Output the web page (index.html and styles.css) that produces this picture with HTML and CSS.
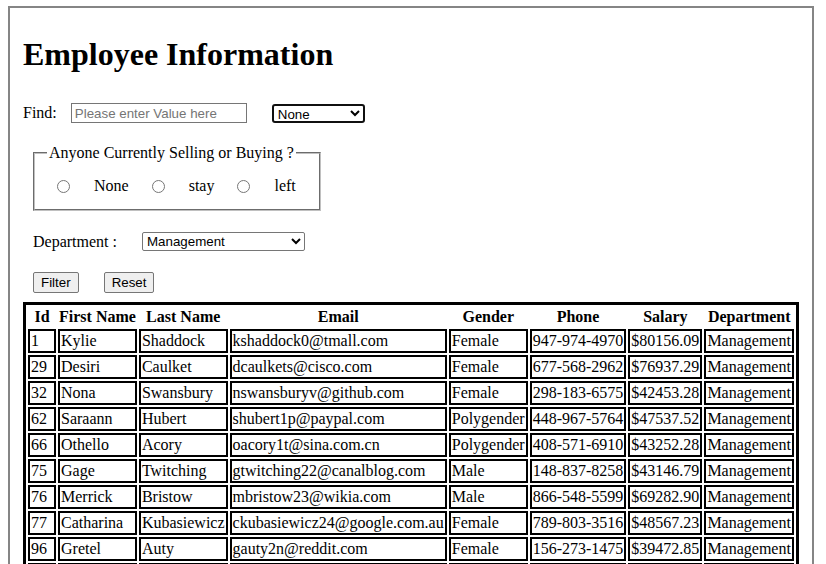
FILE: index.html
```html
<!DOCTYPE html>
<html>
<head>
<meta charset="utf-8">
<title>Employee Information</title>
<link rel="stylesheet" href="styles.css">
</head>
<body>
<div class="page">
  <h1 class="title">Employee Information</h1>
  <div class="find-row">
    <label class="find-label">Find:</label>
    <input class="find-input" type="text" placeholder="Please enter Value here">
    <select class="find-select"><option>None</option></select>
  </div>
  <div class="indent">
    <fieldset class="status">
      <legend class="status-legend">Anyone Currently Selling or Buying ?</legend>
      <div class="radio-row">
        <input class="radio first" type="radio" name="st"><span class="radio-label">None</span>
        <input class="radio" type="radio" name="st"><span class="radio-label">stay</span>
        <input class="radio" type="radio" name="st"><span class="radio-label">left</span>
      </div>
    </fieldset>
    <div class="dept-row">
      <label class="dept-label">Department :</label>
      <select class="dept-select"><option>Management</option></select>
    </div>
    <div class="btn-row">
      <button class="btn">Filter</button>
      <button class="btn reset">Reset</button>
    </div>
  </div>
  <table class="emp">
    <thead>
      <tr><th class="col-id">Id</th><th>First Name</th><th>Last Name</th><th>Email</th><th>Gender</th><th>Phone</th><th>Salary</th><th>Department</th></tr>
    </thead>
    <tbody>
      <tr><td>1</td><td>Kylie</td><td>Shaddock</td><td>kshaddock0@tmall.com</td><td>Female</td><td>947-974-4970</td><td>$80156.09</td><td>Management</td></tr>
      <tr><td>29</td><td>Desiri</td><td>Caulket</td><td>dcaulkets@cisco.com</td><td>Female</td><td>677-568-2962</td><td>$76937.29</td><td>Management</td></tr>
      <tr><td>32</td><td>Nona</td><td>Swansbury</td><td>nswansburyv@github.com</td><td>Female</td><td>298-183-6575</td><td>$42453.28</td><td>Management</td></tr>
      <tr><td>62</td><td>Saraann</td><td>Hubert</td><td>shubert1p@paypal.com</td><td>Polygender</td><td>448-967-5764</td><td>$47537.52</td><td>Management</td></tr>
      <tr><td>66</td><td>Othello</td><td>Acory</td><td>oacory1t@sina.com.cn</td><td>Polygender</td><td>408-571-6910</td><td>$43252.28</td><td>Management</td></tr>
      <tr><td>75</td><td>Gage</td><td>Twitching</td><td>gtwitching22@canalblog.com</td><td>Male</td><td>148-837-8258</td><td>$43146.79</td><td>Management</td></tr>
      <tr><td>76</td><td>Merrick</td><td>Bristow</td><td>mbristow23@wikia.com</td><td>Male</td><td>866-548-5599</td><td>$69282.90</td><td>Management</td></tr>
      <tr><td>77</td><td>Catharina</td><td>Kubasiewicz</td><td>ckubasiewicz24@google.com.au</td><td>Female</td><td>789-803-3516</td><td>$48567.23</td><td>Management</td></tr>
      <tr><td>96</td><td>Gretel</td><td>Auty</td><td>gauty2n@reddit.com</td><td>Female</td><td>156-273-1475</td><td>$39472.85</td><td>Management</td></tr>
      <tr class="tail"><td></td><td></td><td></td><td></td><td></td><td></td><td></td><td></td></tr>
    </tbody>
  </table>
</div>
</body>
</html>
```

FILE: styles.css
```css
html, body {
  margin: 0;
  padding: 0;
  overflow: hidden;
  background: #ffffff;
}

body {
  font-family: "Liberation Serif", "Times New Roman", serif;
  font-size: 16px;
  color: #000;
}

.page {
  box-sizing: border-box;
  width: 806px;
  margin: 6px 0 0 8px;
  border: 2px solid #858585;
  padding: 0 13px 20px 13px;
}

.title {
  font-size: 32px;
  font-weight: bold;
  line-height: 37px;
  margin: 28px 0 0 0;
}

.find-row {
  display: flex;
  align-items: center;
  height: 20px;
  margin-top: 30px;
}

.find-input {
  box-sizing: border-box;
  width: 176px;
  height: 20px;
  margin: 0 0 0 14px;
  padding: 1px 3px;
  border: 1px solid #767676;
  font-family: "Liberation Sans", Arial, sans-serif;
  font-size: 13.33px;
}

.find-input::placeholder {
  color: #757575;
}

.find-select {
  box-sizing: border-box;
  width: 93px;
  height: 19px;
  margin: 0 0 0 25px;
  border: 2px solid #101010;
  border-radius: 3px;
  font-family: "Liberation Sans", Arial, sans-serif;
  font-size: 13.33px;
  background: #fff;
  color: #000;
  padding: 0;
}

.indent {
  margin-left: 10px;
}

.status {
  display: inline-block;
  box-sizing: border-box;
  width: 288px;
  margin: 21px 0 0 0;
  padding: 0 12px 14px 12px;
  border: 2px groove #c0c0c0;
}

.status-legend {
  padding: 0 2px;
  line-height: 18px;
}

.radio-row {
  display: flex;
  align-items: center;
  height: 18px;
  margin-top: 15px;
}

.radio {
  width: 13px;
  height: 13px;
  margin: 0 0 0 23px;
}

.radio.first {
  margin-left: 10px;
}

.radio-label {
  margin-left: 24px;
}

.dept-row {
  display: flex;
  align-items: center;
  height: 19px;
  margin-top: 21px;
}

.dept-select {
  box-sizing: border-box;
  width: 163px;
  height: 19px;
  margin-left: 25px;
  border: 1px solid #767676;
  border-radius: 2px;
  font-family: "Liberation Sans", Arial, sans-serif;
  font-size: 13.33px;
  background: #fff;
  color: #000;
}

.btn-row {
  display: flex;
  margin-top: 21px;
}

.btn {
  box-sizing: border-box;
  height: 21px;
  padding: 1px 7px;
  border: 1px solid #767676;
  border-radius: 2px;
  background: #efefef;
  font-family: "Liberation Sans", Arial, sans-serif;
  font-size: 13.33px;
  color: #000;
}

.btn.reset {
  margin-left: 25px;
}

.emp {
  width: 100%;
  margin-top: 9px;
  border: 3px solid #000;
  border-spacing: 2px;
}

.emp th {
  padding: 1px;
  font-weight: bold;
  text-align: center;
  white-space: nowrap;
}

.emp th.col-id {
  width: 26px;
}

.emp td {
  padding: 1px;
  border: 2px solid #000;
  text-align: left;
  white-space: nowrap;
}

.emp .tail td {
  height: 18px;
}
```
